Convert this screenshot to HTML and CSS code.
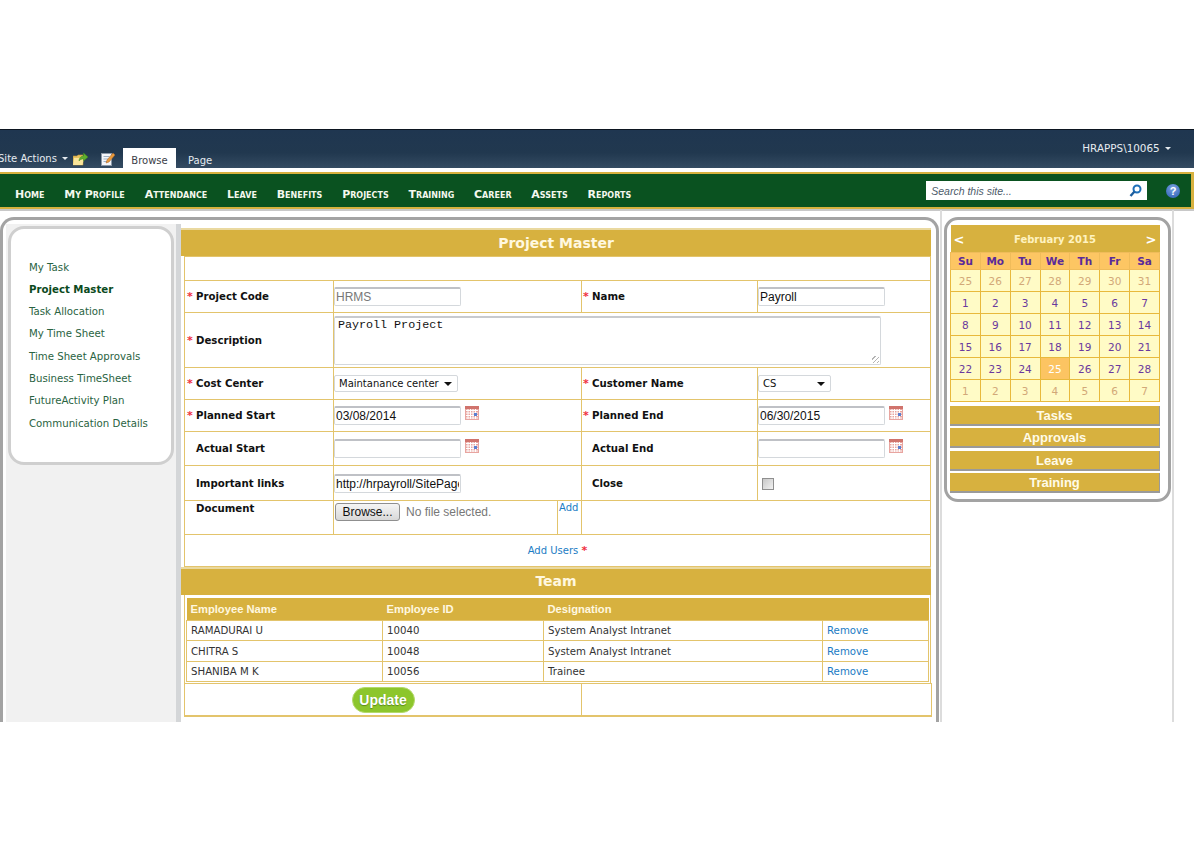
FILE: index.html
```html
<!DOCTYPE html>
<html lang="en">
<head>
    <title>Project Master</title>
    <link rel="stylesheet" href="styles.css">
</head>
<body>
    <svg class="sprites" width="0" height="0">
        <symbol id="cal" viewBox="0 0 14 14">
            <rect x="0" y="0" width="14" height="14" fill="#e8a5a0"/>
            <rect x="0" y="0" width="14" height="3" fill="#d0736c"/>
            <path d="M1 4.500h12M1 7h12M1 9.500h12M1 12h12M3 3v10M5.500 3v10M8 3v10M10.500 3v10" stroke="#fff" stroke-width="1"/>
            <rect x="9" y="7" width="3" height="3" fill="#5b7fd0"/>
        </symbol>
    </svg>

    <div class="shot">
        <div class="ribbon">
            <span class="site-actions">Site Actions <i class="caret"></i></span>
            <svg class="rib-icon folder" width="15" height="14" viewBox="0 0 15 14">
                <path d="M0 4h4l1-1h5v10H0z" fill="#e8c15c" stroke="#b8923a" stroke-width=".6"/>
                <path d="M1 6h10l-1.500 7H0z" fill="#fbe59a"/>
                <path d="M6 9c0-3 2-5 4.500-5V1L15 5l-4.500 4V7C8.500 7 7 7.500 6 9z" fill="#5fae2e" stroke="#3f8a1c" stroke-width=".5"/>
            </svg>
            <svg class="rib-icon edit" width="14" height="14" viewBox="0 0 14 14">
                <rect x=".5" y="1.500" width="10" height="12" fill="#f4f6fa" stroke="#8b98a8"/>
                <path d="M2.500 4.500h6M2.500 7h5M2.500 9.500h4" stroke="#9fb0c4"/>
                <path d="M5 11l1-3 6-7 2 2-6 7z" fill="#e89a3c" stroke="#a8622a" stroke-width=".5"/>
            </svg>
            <span class="tab tab-active">Browse</span>
            <span class="tab">Page</span>
            <span class="user">HRAPPS\10065 <i class="caret"></i></span>
        </div>

        <div class="nav">
            <a>Home</a>
            <a>My Profile</a>
            <a>Attendance</a>
            <a>Leave</a>
            <a>Benefits</a>
            <a>Projects</a>
            <a>Training</a>
            <a>Career</a>
            <a>Assets</a>
            <a>Reports</a>
            <div class="search">
                <span>Search this site...</span>
                <svg width="13" height="13" viewBox="0 0 13 13">
                    <circle cx="8" cy="5" r="3.500" fill="#fff" stroke="#1d6fb8" stroke-width="2"/>
                    <path d="M5.500 7.500L1.500 12" stroke="#1d5e9e" stroke-width="2.400"/>
                </svg>
            </div>
            <div class="help">?</div>
        </div>

        <div class="main">
            <div class="frame">
                <div class="side">
                    <div class="side-card">
                        <a>My Task</a>
                        <a class="active">Project Master</a>
                        <a>Task Allocation</a>
                        <a>My Time Sheet</a>
                        <a>Time Sheet Approvals</a>
                        <a>Business TimeSheet</a>
                        <a>FutureActivity Plan</a>
                        <a>Communication Details</a>
                    </div>
                </div>
                <div class="content">
                    <h2 class="bar">Project Master</h2>
                    <table class="form-table">
                        <colgroup>
                            <col class="c1"><col class="c2"><col class="c3"><col class="c4"><col class="c5">
                        </colgroup>
                        <tr class="r-blank"><td colspan="5"></td></tr>
                        <tr class="r-code">
                            <td><b class="req">*</b><label>Project Code</label></td>
                            <td colspan="2"><input class="txt muted" value="HRMS"></td>
                            <td><b class="req">*</b><label>Name</label></td>
                            <td><input class="txt" value="Payroll"></td>
                        </tr>
                        <tr class="r-desc">
                            <td><b class="req">*</b><label>Description</label></td>
                            <td colspan="4">
                                <div class="area-wrap">
                                    <textarea class="area">Payroll Project</textarea>
                                    <i class="grip"></i>
                                </div>
                            </td>
                        </tr>
                        <tr class="r-std">
                            <td><b class="req">*</b><label>Cost Center</label></td>
                            <td colspan="2"><span class="sel sel-wide">Maintanance center<i></i></span></td>
                            <td><b class="req">*</b><label>Customer Name</label></td>
                            <td><span class="sel sel-small">CS<i></i></span></td>
                        </tr>
                        <tr class="r-std">
                            <td><b class="req">*</b><label>Planned Start</label></td>
                            <td colspan="2"><input class="txt" value="03/08/2014"><svg class="cal"><use href="#cal"/></svg></td>
                            <td><b class="req">*</b><label>Planned End</label></td>
                            <td><input class="txt" value="06/30/2015"><svg class="cal"><use href="#cal"/></svg></td>
                        </tr>
                        <tr class="r-act">
                            <td><b class="req off">*</b><label>Actual Start</label></td>
                            <td colspan="2"><input class="txt"><svg class="cal"><use href="#cal"/></svg></td>
                            <td><b class="req off">*</b><label>Actual End</label></td>
                            <td><input class="txt"><svg class="cal"><use href="#cal"/></svg></td>
                        </tr>
                        <tr class="r-link">
                            <td><b class="req off">*</b><label>Important links</label></td>
                            <td colspan="2"><input class="txt" value="http://hrpayroll/SitePages/Project.aspx"></td>
                            <td><b class="req off">*</b><label>Close</label></td>
                            <td><span class="check"></span></td>
                        </tr>
                        <tr class="r-doc">
                            <td class="top"><b class="req off">*</b><label>Document</label></td>
                            <td class="top"><span class="browse">Browse...</span><span class="nofile">No file selected.</span></td>
                            <td class="top add"><a>Add</a></td>
                            <td colspan="2"></td>
                        </tr>
                        <tr class="r-users">
                            <td colspan="5" class="center"><a>Add Users</a> <b class="req">*</b></td>
                        </tr>
                    </table>
                    <h2 class="bar bar-team">Team</h2>
                    <div class="team-wrap">
                        <table class="team">
                            <colgroup>
                                <col class="t1"><col class="t2"><col class="t3"><col class="t4">
                            </colgroup>
                            <tr><th>Employee Name</th><th>Employee ID</th><th colspan="2">Designation</th></tr>
                            <tr class="short"><td>RAMADURAI U</td><td>10040</td><td>System Analyst Intranet</td><td><a>Remove</a></td></tr>
                            <tr><td>CHITRA S</td><td>10048</td><td>System Analyst Intranet</td><td><a>Remove</a></td></tr>
                            <tr class="short"><td>SHANIBA M K</td><td>10056</td><td>Trainee</td><td><a>Remove</a></td></tr>
                        </table>
                    </div>
                    <table class="update-table">
                        <colgroup>
                            <col class="u1"><col class="u2">
                        </colgroup>
                        <tr class="r-update">
                            <td class="center"><span class="update">Update</span></td>
                            <td></td>
                        </tr>
                        <tr><td colspan="2"></td></tr>
                    </table>
                </div>
            </div>

            <div class="right">
                <div class="panel">
                    <table class="calendar">
                        <colgroup>
                            <col><col><col><col><col><col><col>
                        </colgroup>
                        <tr class="cal-title">
                            <td class="arrow">&lt;</td>
                            <td colspan="5">February 2015</td>
                            <td class="arrow arrow-r">&gt;</td>
                        </tr>
                        <tr class="cal-dow"><th>Su</th><th>Mo</th><th>Tu</th><th>We</th><th>Th</th><th>Fr</th><th>Sa</th></tr>
                        <tr class="other"><td>25</td><td>26</td><td>27</td><td>28</td><td>29</td><td>30</td><td>31</td></tr>
                        <tr><td>1</td><td>2</td><td>3</td><td>4</td><td>5</td><td>6</td><td>7</td></tr>
                        <tr><td>8</td><td>9</td><td>10</td><td>11</td><td>12</td><td>13</td><td>14</td></tr>
                        <tr><td>15</td><td>16</td><td>17</td><td>18</td><td>19</td><td>20</td><td>21</td></tr>
                        <tr><td>22</td><td>23</td><td>24</td><td class="today">25</td><td>26</td><td>27</td><td>28</td></tr>
                        <tr class="other"><td>1</td><td>2</td><td>3</td><td>4</td><td>5</td><td>6</td><td>7</td></tr>
                    </table>
                    <div class="acc">Tasks</div>
                    <div class="acc">Approvals</div>
                    <div class="acc">Leave</div>
                    <div class="acc">Training</div>
                </div>
            </div>
        </div>
    </div>
</body>
</html>
```

FILE: styles.css
```css
body {
    margin: 0;
    background: #fff;
    font-family: "DejaVu Sans", Verdana, sans-serif;
    font-size: 10.5px;
    color: #111;
}

.sprites {
    position: absolute;
}

.shot {
    margin-top: 129px;
    height: 593px;
    overflow: hidden;
}

/* ribbon */
.ribbon {
    height: 38px;
    border-top: 1px solid #0c1520;
    background: linear-gradient(#1f3650 0%, #21384f 60%, #344b62 100%);
    display: flex;
    align-items: flex-start;
    color: #e6ebf0;
    white-space: nowrap;
}

.site-actions {
    margin: 23px 0 0 -2px;
    font-size: 10px;
    width: 75px;
    flex: none;
}

.caret {
    display: inline-block;
    width: 0;
    height: 0;
    margin: 0 0 2px 2px;
    border: 3px solid transparent;
    border-top-color: #e6ebf0;
    border-bottom: 0;
}

.rib-icon {
    flex: none;
    margin-top: 22px;
}

.rib-icon.edit {
    margin-left: 13px;
    margin-right: 8px;
}

.tab {
    height: 20px;
    margin-top: 18px;
    padding: 0 12px;
    line-height: 25px;
    font-size: 10px;
    flex: none;
}

.tab-active {
    width: 53px;
    box-sizing: border-box;
    padding: 0;
    text-align: center;
    background: #fff;
    color: #3a4048;
}

.user {
    margin: 12px 0 0 auto;
    padding-right: 23px;
    font-size: 10.400px;
}

/* main nav */
.nav {
    margin-top: 4px;
    height: 33px;
    display: flex;
    align-items: center;
    gap: 19.800px;
    padding-left: 15px;
    background: #0a5220;
    border: solid #d7b13f;
    border-width: 2px 3px 2px 0;
    box-shadow: 0 2px 0 #c8c8c8;
}

.nav a {
    padding-top: 7px;
    color: #f4f8ee;
    font-weight: bold;
    font-size: 11px;
    font-variant: small-caps;
    white-space: nowrap;
}

.search {
    margin-left: auto;
    margin-right: -1px;
    width: 221px;
    height: 19px;
    box-sizing: border-box;
    display: flex;
    align-items: center;
    justify-content: space-between;
    padding: 0 5px;
    background: #fff;
    font-family: "Liberation Sans", Arial, sans-serif;
    font-size: 10.500px;
    font-style: italic;
    color: #4d5b6a;
}

.help {
    width: 14px;
    height: 14px;
    margin: 0 11px 0 0;
    border-radius: 50%;
    background: radial-gradient(circle at 50% 30%, #7ba4e0, #2a5cb4);
    color: #fff;
    font: bold 11px/14px "Liberation Sans", Arial, sans-serif;
    text-align: center;
}

/* body columns */
.main {
    display: flex;
    align-items: flex-start;
    padding-top: 1px;
}

.frame {
    width: 939px;
    height: 520px;
    margin-top: 7px;
    box-sizing: border-box;
    border: 3px solid #a3a3a3;
    border-bottom: 0;
    border-radius: 14px 14px 0 0;
    padding: 4px 0 0 3px;
    display: flex;
    flex: none;
    background: #fff;
}

.side {
    width: 170px;
    box-sizing: border-box;
    background: #f1f1f1;
    padding: 2px 2px 0;
    flex: none;
}

.side-card {
    height: 239px;
    box-sizing: border-box;
    border: 3px solid #cfcfcf;
    border-radius: 16px;
    background: #fff;
    padding: 27.500px 0 0 18px;
}

.side-card a {
    display: block;
    height: 22.300px;
    line-height: 22px;
    font-size: 10.200px;
    color: #2a6342;
}

.side-card a.active {
    color: #0b4a20;
    font-weight: bold;
}

.content {
    border-left: 5px solid #d4d6d8;
    width: 755px;
    padding-top: 4px;
    flex: none;
}

/* form */
.bar {
    margin: 0;
    height: 28px;
    box-sizing: border-box;
    border-top: 2px solid #ead9a0;
    background: #d7b13f;
    color: #fff8e0;
    font-size: 14px;
    line-height: 26px;
    font-weight: bold;
    text-align: center;
    width: 750px;
}

.bar-team {
    line-height: 24px;
}

table {
    border-collapse: collapse;
    table-layout: fixed;
}

.form-table {
    width: 747px;
    margin-left: 3px;
}

.form-table td,
.update-table td {
    border: 1px solid #e3c46c;
    padding: 0 0 0 2px;
    vertical-align: middle;
}

.form-table td:nth-child(even) {
    padding-left: 0;
}

.form-table td:nth-child(3) {
    padding-left: 1px;
}

.c1 { width: 149px; }
.c2 { width: 224px; }
.c3 { width: 24px; }
.c4 { width: 176px; }
.c5 { width: 173px; }

.r-blank { height: 24px; }
.r-code { height: 32px; }
.r-desc { height: 55px; }
.r-std { height: 32px; }
.r-act { height: 34px; }
.r-link { height: 35px; }
.r-doc { height: 34px; }
.r-users { height: 32px; }

.req {
    display: inline-block;
    width: 9px;
    color: #f03040;
    font-weight: bold;
    font-size: 11px;
}

.req.off {
    visibility: hidden;
}

label {
    font-weight: bold;
    font-size: 10.200px;
    color: #111;
}

.txt {
    width: 127px;
    height: 19px;
    box-sizing: border-box;
    border: 1px solid #d4d8dc;
    border-top: 2px solid #bfc1c6;
    border-radius: 2px;
    padding: 0 1px;
    font-family: "Liberation Sans", Arial, sans-serif;
    font-size: 12px;
    color: #111;
    vertical-align: middle;
}

.txt.muted {
    color: #777;
}

.area-wrap {
    position: relative;
    width: 547px;
}

.area {
    display: block;
    width: 547px;
    height: 49px;
    box-sizing: border-box;
    border: 1px solid #d4d8dc;
    border-top: 2px solid #c8cace;
    border-radius: 2px;
    padding: 0 3px;
    resize: none;
    font-family: "Liberation Mono", monospace;
    font-size: 11.700px;
    color: #111;
}

.grip {
    position: absolute;
    right: 2px;
    bottom: 2px;
    width: 7px;
    height: 7px;
    background: repeating-linear-gradient(135deg, transparent 0 2px, #b4b4b4 2px 3px);
}

.cal {
    width: 14px;
    height: 14px;
    margin: 0 0 5px 4px;
    vertical-align: middle;
}

.sel {
    display: inline-block;
    height: 17px;
    box-sizing: border-box;
    border: 1px solid #d4d8dc;
    border-radius: 2px;
    padding-left: 4px;
    line-height: 15px;
    font-size: 10px;
    position: relative;
    vertical-align: middle;
}

.sel-wide { width: 124px; }
.sel-small { width: 73px; }

.sel i {
    position: absolute;
    right: 5px;
    top: 6px;
    border: 4px solid transparent;
    border-top: 4px solid #111;
    border-bottom: 0;
}

.check {
    display: inline-block;
    width: 12px;
    height: 12px;
    box-sizing: border-box;
    margin-left: 4px;
    border: 1px solid #8f8f8f;
    background: linear-gradient(135deg, #c8c8c8, #f2f2f2);
    vertical-align: middle;
}

.form-table .top {
    vertical-align: top;
}

.top label {
    line-height: 15px;
}

.browse {
    display: inline-block;
    width: 65px;
    height: 18px;
    box-sizing: border-box;
    margin: 2px 0 0 1px;
    border: 1px solid #8f8f8f;
    border-radius: 3px;
    background: linear-gradient(#f5f5f5, #d8d8d8);
    text-align: center;
    font: 12px/16px "Liberation Sans", Arial, sans-serif;
    color: #111;
}

.nofile {
    margin-left: 6px;
    font: 12px "Liberation Sans", Arial, sans-serif;
    color: #777;
}

a {
    color: #1b7cc4;
}

.add a,
.center a {
    font-size: 10px;
}

.add {
    line-height: 13px;
}

.form-table .center,
.update-table .center {
    text-align: center;
    padding: 0;
}

.center .req {
    width: auto;
}

/* team */
.team-wrap {
    width: 747px;
    margin-left: 3px;
    box-sizing: border-box;
    border: solid #e3c46c;
    border-width: 0 1px;
    padding: 3px 0 1px 1px;
}

.team {
    width: 742px;
}

.t1 { width: 196px; }
.t2 { width: 161px; }
.t3 { width: 279px; }
.t4 { width: 106px; }

.team th {
    height: 22px;
    padding: 0 4px;
    background: #d7b13f;
    color: #fff8e0;
    font-family: "Liberation Sans", Arial, sans-serif;
    font-size: 11.200px;
    text-align: left;
}

.team td {
    height: 20px;
    padding: 0 4px;
    border: 1px solid #e3c46c;
    font-size: 10.200px;
    color: #333;
}

.team .short td {
    height: 19px;
}

.update-table {
    width: 747px;
    margin-left: 3px;
}

.u1 { width: 397px; }
.u2 { width: 350px; }

.r-update {
    height: 32px;
}

.update {
    display: inline-block;
    width: 63px;
    height: 26px;
    border-radius: 13px;
    border: 1px solid #b5d96a;
    box-sizing: border-box;
    background: #8cc62c;
    color: #fff;
    font: bold 14px/24px "Liberation Sans", Arial, sans-serif;
    text-shadow: 0 1px 1px #5a8a1a;
    vertical-align: middle;
}

/* right column */
.right {
    width: 234px;
    height: 520px;
    box-sizing: border-box;
    border: solid #dcdcdc;
    border-width: 0 2px;
    margin-left: 1px;
    padding: 7px 0 0 2px;
    flex: none;
}

.panel {
    width: 227px;
    height: 285px;
    box-sizing: border-box;
    border: 3px solid #a3a3a3;
    border-radius: 14px;
    padding: 5px 0 0 3px;
}

.calendar {
    width: 210px;
    white-space: nowrap;
}

.calendar td,
.calendar th {
    padding: 0;
    text-align: center;
    height: 21px;
    border: 1px solid #e8b93c;
    background: #fffbc6;
    color: #6a3a9e;
    font-size: 10.500px;
}

.calendar .cal-title td {
    height: 26px;
    padding-top: 1px;
    border: 0;
    background: #d7b13f;
    color: #fff3c0;
    font-weight: bold;
    font-size: 10px;
}

.calendar .cal-title .arrow {
    color: #fff;
    font-size: 13px;
    text-align: left;
    padding-left: 3px;
}

.calendar .cal-title .arrow-r {
    text-align: right;
    padding: 1px 3px 0 0;
}

.calendar th {
    height: 16px;
    background: #fdc663;
    border-color: #f0bc5a;
    color: #5a2a9a;
    font-weight: bold;
}

.calendar .other td {
    color: #d2a878;
}

.calendar .today {
    background: #fcc462;
    color: #fff;
}

.acc {
    width: 210px;
    height: 20px;
    margin-top: 2.300px;
    box-sizing: border-box;
    background: #d7b13f;
    border-bottom: 2px solid #9a9a9a;
    border-right: 1px solid #9a9a9a;
    color: #fffbe8;
    font: bold 13px/19px "Liberation Sans", Arial, sans-serif;
    text-align: center;
}

.calendar + .acc {
    margin-top: 4px;
}
```
